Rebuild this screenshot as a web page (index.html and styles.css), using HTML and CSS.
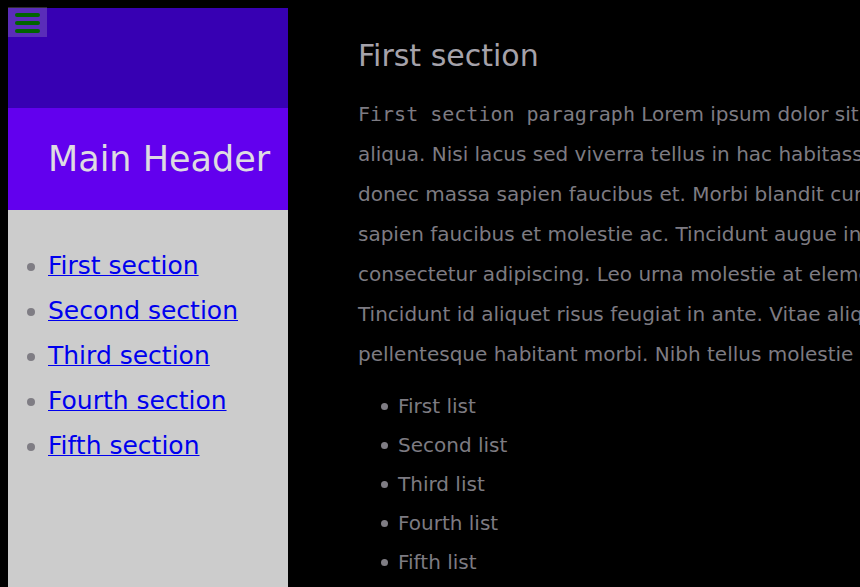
FILE: index.html
```html
<!DOCTYPE html>
<html lang="en">
<head>
<meta charset="utf-8">
<meta name="viewport" content="width=device-width, initial-scale=1">
<title>Main Header</title>
<link rel="stylesheet" href="styles.css">
</head>
<body>
<aside class="sidebar">
  <div class="sidebar-top">
    <button class="menu-button" type="button" aria-label="Menu">
      <span class="bar"></span>
      <span class="bar"></span>
      <span class="bar"></span>
    </button>
  </div>
  <header class="sidebar-header"><h1>Main Header</h1></header>
  <nav>
    <ul class="nav-list">
      <li><a href="#first">First section</a></li>
      <li><a href="#second">Second section</a></li>
      <li><a href="#third">Third section</a></li>
      <li><a href="#fourth">Fourth section</a></li>
      <li><a href="#fifth">Fifth section</a></li>
    </ul>
  </nav>
</aside>
<main class="content">
  <section id="first">
    <h2>First section</h2>
    <p><code>First section paragraph</code> Lorem ipsum dolor sit<br>
    aliqua. Nisi lacus sed viverra tellus in hac habitasse<br>
    donec massa sapien faucibus et. Morbi blandit cursus<br>
    sapien faucibus et molestie ac. Tincidunt augue interdum<br>
    consectetur adipiscing. Leo urna molestie at elementum<br>
    Tincidunt id aliquet risus feugiat in ante. Vitae aliquet<br>
    pellentesque habitant morbi. Nibh tellus molestie</p>
    <ul class="item-list">
      <li>First list</li>
      <li>Second list</li>
      <li>Third list</li>
      <li>Fourth list</li>
      <li>Fifth list</li>
    </ul>
  </section>
</main>
</body>
</html>
```
FILE: styles.css
```css
* {
  box-sizing: border-box;
}

body {
  display: flex;
  min-height: 100vh;
  margin: 0;
  padding: 8px 0 0 8px;
  overflow: hidden;
  background: #000;
  color: #7d7b82;
  font-family: "DejaVu Sans", sans-serif;
  font-size: 20px;
}

h1,
h2,
p,
ul {
  margin: 0;
}

h1,
h2 {
  font-weight: 400;
}

ul {
  list-style: none;
}

li::before {
  content: "";
  display: inline-block;
  border-radius: 50%;
  background: #7f7d84;
  vertical-align: 3px;
}

.sidebar {
  flex: 0 0 280px;
  background: #ccc;
}

.sidebar-top {
  display: flow-root;
  height: 100px;
  background: #3700b3;
}

.menu-button {
  display: flex;
  flex-direction: column;
  gap: 4px;
  margin: -1px 0 0;
  padding: 6px 7px 4px;
  border: 0;
  background: rgba(204, 187, 204, 0.24);
}

.bar {
  width: 25px;
  height: 4px;
  border-radius: 2px;
  background: #006400;
}

.sidebar-header {
  padding: 30px 0 30px 40px;
  background: #6200ee;
}

h1 {
  color: #dedbe2;
  font-size: 35px;
  line-height: 42px;
  white-space: nowrap;
}

.nav-list {
  padding: 33px 0 0 40px;
  font-size: 25px;
  line-height: 45px;
}

.nav-list li::before {
  width: 8px;
  height: 8px;
  margin: 0 13px 0 -21px;
}

.nav-list a {
  color: #00e;
  text-decoration-thickness: 1px;
}

.content {
  flex: 1;
  min-width: 0;
  padding: 30px 0 0 70px;
  overflow: hidden;
  white-space: nowrap;
}

h2 {
  color: #a5a2aa;
  font-size: 30px;
  line-height: 36px;
}

p {
  padding: 20px 0 13px;
  line-height: 40px;
}

code {
  font-family: "DejaVu Sans Mono", monospace;
  font-size: 20px;
}

.item-list {
  padding-left: 40px;
  line-height: 39px;
}

.item-list li::before {
  width: 7px;
  height: 7px;
  margin: 0 10px 0 -17px;
}
```
